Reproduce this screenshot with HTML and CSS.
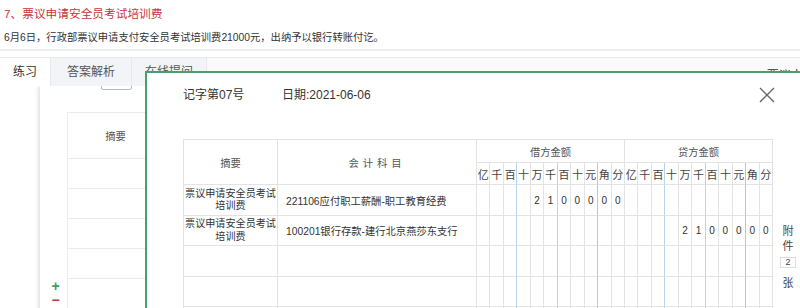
FILE: index.html
```html
<!DOCTYPE html>
<html lang="zh">
<head>
  <meta charset="UTF-8" />
  <title>凭证练习</title>
  <link rel="stylesheet" href="styles.css">
</head>
<body>
  <div class="question">
    <div class="q-title">7、票议申请安全员考试培训费</div>
    <div class="q-desc">6月6日，行政部票议申请支付安全员考试培训费21000元，出纳予以银行转账付讫。</div>
  </div>
  <div class="divider"></div>

  <div class="tabs">
    <div class="tab active">练习</div>
    <div class="tab">答案解析</div>
    <div class="tab tab-ask">在线提问</div>
    <div class="tab-extra">7、票议申请安全员考试培训费</div>
  </div>

  <div class="panel">
    <div class="peek">
      <div class="peek-inner">
        <span class="peek-label">凭证字</span>
        <span class="peek-box"></span>
        <span class="peek-dash">-</span>
      </div>
    </div>
    <div class="panel-body">
      <div class="row-ctrl">
        <span class="plus">+</span>
        <span class="minus">−</span>
      </div>
      <table class="grid">
        <tr><th class="g-sum">摘要</th><th></th></tr>
        <tr><td></td><td></td></tr>
        <tr><td></td><td></td></tr>
        <tr><td></td><td></td></tr>
        <tr><td></td><td></td></tr>
        <tr><td></td><td></td></tr>
      </table>
    </div>
  </div>

  <div class="modal">
    <div class="modal-head">
      <span class="v-no">记字第07号</span>
      <span class="v-date">日期:2021-06-06</span>
      <span class="close">
        <svg width="16" height="16" viewBox="0 0 16 16"><path d="M1 1 L15 15 M15 1 L1 15" stroke="#666" stroke-width="1.3" fill="none"/></svg>
      </span>
    </div>
    <div class="voucher">
      <table class="vt">
        <colgroup>
          <col class="c-sum"><col class="c-acc">
          <col><col><col><col><col><col><col><col><col><col><col>
          <col><col><col><col><col><col><col><col><col><col><col>
        </colgroup>
        <thead>
          <tr class="head1">
            <th rowspan="2" class="h-sum">摘要</th>
            <th rowspan="2" class="h-acc">会计科目</th>
            <th colspan="11">借方金额</th>
            <th colspan="11">贷方金额</th>
          </tr>
          <tr class="units">
            <th>亿</th><th>千</th><th>百</th><th>十</th><th>万</th><th>千</th><th>百</th><th>十</th><th>元</th><th>角</th><th>分</th>
            <th>亿</th><th>千</th><th>百</th><th>十</th><th>万</th><th>千</th><th>百</th><th>十</th><th>元</th><th>角</th><th>分</th>
          </tr>
        </thead>
        <tbody>
          <tr class="r-odd">
            <td class="sum">票议申请安全员考试培训费</td>
            <td class="acc">221106应付职工薪酬-职工教育经费</td>
            <td></td><td></td><td></td><td></td><td>2</td><td>1</td><td>0</td><td>0</td><td>0</td><td>0</td><td>0</td>
            <td></td><td></td><td></td><td></td><td></td><td></td><td></td><td></td><td></td><td></td><td></td>
          </tr>
          <tr class="r-even">
            <td class="sum">票议申请安全员考试培训费</td>
            <td class="acc">100201银行存款-建行北京燕莎东支行</td>
            <td></td><td></td><td></td><td></td><td></td><td></td><td></td><td></td><td></td><td></td><td></td>
            <td></td><td></td><td></td><td></td><td>2</td><td>1</td><td>0</td><td>0</td><td>0</td><td>0</td><td>0</td>
          </tr>
          <tr class="r-odd">
            <td class="sum"></td><td class="acc"></td>
            <td></td><td></td><td></td><td></td><td></td><td></td><td></td><td></td><td></td><td></td><td></td>
            <td></td><td></td><td></td><td></td><td></td><td></td><td></td><td></td><td></td><td></td><td></td>
          </tr>
          <tr class="r-even">
            <td class="sum"></td><td class="acc"></td>
            <td></td><td></td><td></td><td></td><td></td><td></td><td></td><td></td><td></td><td></td><td></td>
            <td></td><td></td><td></td><td></td><td></td><td></td><td></td><td></td><td></td><td></td><td></td>
          </tr>
          <tr class="r-odd">
            <td class="sum"></td><td class="acc"></td>
            <td></td><td></td><td></td><td></td><td></td><td></td><td></td><td></td><td></td><td></td><td></td>
            <td></td><td></td><td></td><td></td><td></td><td></td><td></td><td></td><td></td><td></td><td></td>
          </tr>
        </tbody>
      </table>
      <div class="attach">
        <span>附</span>
        <span>件</span>
        <span class="attach-num">2</span>
        <span>张</span>
      </div>
    </div>
  </div>
</body>
</html>
```

FILE: styles.css
```css
* {
  box-sizing: border-box;
}
body {
  margin: 0;
  width: 800px;
  height: 308px;
  overflow: hidden;
  position: relative;
  font-family: "Liberation Sans", "Noto Sans CJK SC", sans-serif;
  color: #333;
  background: #fff;
}

/* question text */
.question {
  padding: 6px 4px 0;
}
.q-title {
  font-size: 11.7px;
  line-height: 16px;
  color: #c8363d;
}
.q-desc {
  margin-top: 8px;
  font-size: 10.3px;
  line-height: 16px;
}
.divider {
  height: 2px;
  margin-top: 3px;
  background: #eee;
}

/* tabs */
.tabs {
  display: flex;
  height: 29px;
  margin-top: 6px;
  border-top: 1px solid #e8e8e8;
  background: #fafafa;
  overflow: hidden;
}
.tab {
  flex-shrink: 0;
  padding: 0 16px;
  font-size: 12px;
  line-height: 28px;
  white-space: nowrap;
  color: #555;
  background: #f2f4f7;
  border-right: 1px solid #e6e9ee;
}
.tab.active {
  padding: 0 13px;
  color: #333;
  background: #fff;
}
.tab.tab-ask {
  padding: 0 13px;
}
.tab-extra {
  flex-shrink: 0;
  margin-left: 541px;
  padding-top: 11px;
  font-size: 12px;
  line-height: 14px;
  white-space: nowrap;
}

/* background panel */
.panel {
  margin-left: 40px;
  height: 230px;
  background: #fff;
  box-shadow: -2px 0 4px rgba(0, 0, 0, 0.12);
}
.peek {
  height: 6px;
  overflow: hidden;
  padding-left: 25px;
}
.peek-inner {
  display: flex;
  align-items: center;
  gap: 5px;
  height: 20px;
  margin-top: -16px;
  font-size: 10.3px;
  color: #555;
}
.peek-box {
  width: 31px;
  height: 19px;
  border: 1px solid #bbb;
  border-radius: 2px;
}
.panel-body {
  display: flex;
  padding-top: 20px;
}
.row-ctrl {
  display: flex;
  flex-direction: column;
  align-items: center;
  width: 27px;
  padding: 167px 0 0 4px;
  font-size: 14px;
  line-height: 14px;
  font-weight: bold;
}
.plus {
  color: #3a9e5e;
}
.minus {
  color: #c0392b;
}
.grid {
  width: 400px;
  border-collapse: collapse;
  border: 1px solid #ebebeb;
}
.grid th, .grid td {
  border: 1px solid #ebebeb;
  height: 30px;
  padding: 0;
}
.grid th {
  height: 46px;
  font-size: 10.3px;
  font-weight: normal;
  color: #555;
}
.grid .g-sum {
  width: 96px;
}

/* voucher modal */
.modal {
  position: absolute;
  left: 145px;
  top: 71px;
  width: 680px;
  height: 260px;
  padding: 14px 0 0 36px;
  border: 2px solid #46a06e;
  background: #fff;
}
.modal-head {
  display: flex;
  align-items: center;
  width: 592px;
  height: 16px;
  font-size: 12px;
  line-height: 16px;
}
.v-no {
  width: 99px;
}
.close {
  margin-left: auto;
  height: 16px;
}
.voucher {
  display: flex;
  align-items: flex-start;
  margin-top: 36px;
}
.vt {
  width: 590px;
  table-layout: fixed;
  border-collapse: separate;
  border-spacing: 0;
  border-top: 1px solid #e3e3e3;
  border-left: 1px solid #e3e3e3;
  font-size: 10.3px;
}
.vt .c-sum {
  width: 94px;
}
.vt .c-acc {
  width: 199px;
}
.vt th, .vt td {
  padding: 0;
  text-align: center;
  font-weight: normal;
  border-right: 1px solid #e3e3e3;
  border-bottom: 1px solid #e3e3e3;
}
.vt th {
  color: #555;
}
.vt .head1 th {
  height: 23px;
}
.vt .units th {
  height: 22px;
  font-size: 11px;
  color: #444;
}
.vt .h-acc {
  letter-spacing: 4px;
}
.vt .r-odd td {
  height: 31px;
}
.vt .r-even td {
  height: 30px;
}
.vt td {
  font-size: 10px;
}
.vt td.sum {
  padding: 0;
  font-size: 10.1px;
  line-height: 12.3px;
}
.vt td.acc {
  padding-left: 8px;
  text-align: left;
  white-space: nowrap;
  font-size: 10.3px;
}
.units th:nth-child(3),
.units th:nth-child(6),
.units th:nth-child(14),
.units th:nth-child(17),
.vt tbody td:nth-child(5),
.vt tbody td:nth-child(8),
.vt tbody td:nth-child(16),
.vt tbody td:nth-child(19) {
  border-right-color: #b5d5ee;
}
.units th:nth-child(9),
.units th:nth-child(20),
.vt tbody td:nth-child(11),
.vt tbody td:nth-child(22) {
  border-right-color: #ebb3b3;
}
.attach {
  display: flex;
  flex-direction: column;
  align-items: center;
  width: 16px;
  margin-left: 7px;
  padding-top: 85px;
  font-size: 11px;
  line-height: 15px;
  color: #444;
}
.attach-num {
  width: 16px;
  height: 11px;
  margin: 3px 0 8px;
  border: 1px solid #ddd;
  font-size: 9px;
  line-height: 9px;
  text-align: center;
}
```
